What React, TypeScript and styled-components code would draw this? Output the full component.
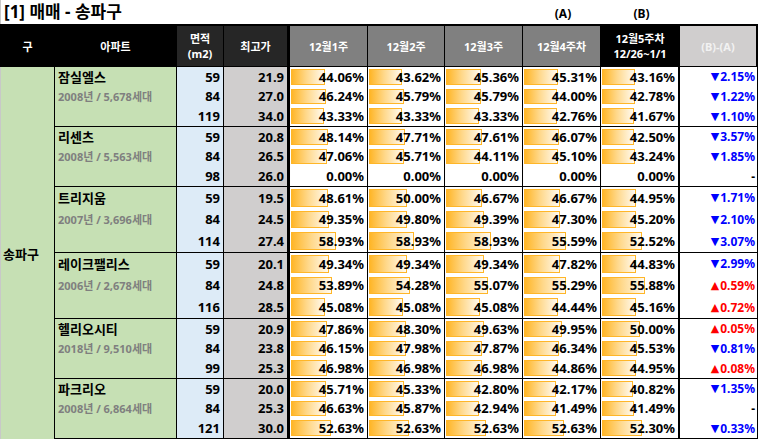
import React from "react";
import styled, { createGlobalStyle } from "styled-components";

const GlobalStyle = createGlobalStyle`
  html, body { margin: 0; padding: 0; background: #fff; }
  body { font-family: "Noto Sans", "Noto Sans CJK KR", sans-serif; color: #000; }
`;

const COLS = "122px 47px 66px 78px 77px 78px 78px 79px 78px";

type Row = { area: string; top: string; w: number[]; diff: string };
type Apt = { name: string; sub: string; h: number; rows: Row[] };

const DATA: Apt[] = [
  {
    name: "잠실엘스", sub: "2008년 / 5,678세대", h: 60,
    rows: [
      { area: "59", top: "21.9", w: [44.06, 43.62, 45.36, 45.31, 43.16], diff: "-2.15" },
      { area: "84", top: "27.0", w: [46.24, 45.79, 45.79, 44.0, 42.78], diff: "-1.22" },
      { area: "119", top: "34.0", w: [43.33, 43.33, 43.33, 42.76, 41.67], diff: "-1.10" },
    ],
  },
  {
    name: "리센츠", sub: "2008년 / 5,563세대", h: 60,
    rows: [
      { area: "59", top: "20.8", w: [48.14, 47.71, 47.61, 46.07, 42.5], diff: "-3.57" },
      { area: "84", top: "26.5", w: [47.06, 45.71, 44.11, 45.1, 43.24], diff: "-1.85" },
      { area: "98", top: "26.0", w: [0, 0, 0, 0, 0], diff: "0" },
    ],
  },
  {
    name: "트리지움", sub: "2007년 / 3,696세대", h: 66,
    rows: [
      { area: "59", top: "19.5", w: [48.61, 50.0, 46.67, 46.67, 44.95], diff: "-1.71" },
      { area: "84", top: "24.5", w: [49.35, 49.8, 49.39, 47.3, 45.2], diff: "-2.10" },
      { area: "114", top: "27.4", w: [58.93, 58.93, 58.93, 55.59, 52.52], diff: "-3.07" },
    ],
  },
  {
    name: "레이크팰리스", sub: "2006년 / 2,678세대", h: 66,
    rows: [
      { area: "59", top: "20.1", w: [49.34, 49.34, 49.34, 47.82, 44.83], diff: "-2.99" },
      { area: "84", top: "24.8", w: [53.89, 54.28, 55.07, 55.29, 55.88], diff: "+0.59" },
      { area: "116", top: "28.5", w: [45.08, 45.08, 45.08, 44.44, 45.16], diff: "+0.72" },
    ],
  },
  {
    name: "헬리오시티", sub: "2018년 / 9,510세대", h: 60,
    rows: [
      { area: "59", top: "20.9", w: [47.86, 48.3, 49.63, 49.95, 50.0], diff: "+0.05" },
      { area: "84", top: "23.8", w: [46.15, 47.98, 47.87, 46.34, 45.53], diff: "-0.81" },
      { area: "99", top: "25.3", w: [46.98, 46.98, 46.98, 44.86, 44.95], diff: "+0.08" },
    ],
  },
  {
    name: "파크리오", sub: "2008년 / 6,864세대", h: 60,
    rows: [
      { area: "59", top: "20.0", w: [45.71, 45.33, 42.8, 42.17, 40.82], diff: "-1.35" },
      { area: "84", top: "25.3", w: [46.63, 45.87, 42.94, 41.49, 41.49], diff: "0" },
      { area: "121", top: "30.0", w: [52.63, 52.63, 52.63, 52.63, 52.3], diff: "-0.33" },
    ],
  },
];

const Sheet = styled.div`
  width: 760px;
  height: 440px;
  overflow: hidden;
  display: flex;
  flex-direction: column;
`;

const TitleRow = styled.div`
  height: 24px;
  display: grid;
  grid-template-columns: 55px ${COLS};
  align-items: center;
  box-sizing: border-box;
  border-left: 1px solid #c8c8c8;
`;

const Title = styled.h1`
  grid-column: 1 / 7;
  margin: 0;
  padding-left: 3px;
  font-size: 17px;
  font-weight: 700;
  white-space: nowrap;
  line-height: 24px;
`;

const Marker = styled.span<{ $col: number }>`
  grid-column: ${(p) => p.$col};
  text-align: center;
  font-size: 12px;
  font-weight: 700;
  padding-top: 2px;
`;

const HeaderRow = styled.div`
  display: grid;
  grid-template-columns: 55px ${COLS};
  width: 758px;
  height: 43px;
  box-sizing: border-box;
  background: #000;
  padding: 2px 0 1px;
`;

const HeadCell = styled.div<{ $bg: string; $color?: string; $br?: number; $bl?: number }>`
  background: ${(p) => p.$bg};
  color: ${(p) => p.$color || "#fff"};
  border-right: ${(p) => p.$br ?? 1}px solid #000;
  border-left: ${(p) => p.$bl ?? 0}px solid #000;
  box-sizing: border-box;
  display: flex;
  flex-direction: column;
  align-items: center;
  justify-content: center;
  font-size: 11px;
  font-weight: 700;
  line-height: 15px;
  text-align: center;
  white-space: nowrap;
`;

const Body = styled.div`
  display: flex;
  height: 372px;
`;

const GuCell = styled.div`
  width: 55px;
  flex: none;
  box-sizing: border-box;
  border-left: 1px solid #c8c8c8;
  border-right: 1px solid #000;
  background: #c6e0b4;
  display: flex;
  align-items: center;
  padding-left: 2px;
  font-size: 13px;
  font-weight: 700;
`;

const Groups = styled.div`
  display: flex;
  flex-direction: column;
`;

const Group = styled.div<{ $h: number }>`
  display: grid;
  grid-template-columns: ${COLS};
  grid-template-rows: repeat(3, 1fr);
  height: ${(p) => p.$h}px;
  box-sizing: border-box;
  border-bottom: 1px solid #000;
`;

const AptCell = styled.div`
  grid-row: span 3;
  background: #c6e0b4;
  border-right: 1px solid #000;
  display: grid;
  grid-template-rows: repeat(3, 1fr);
  align-items: center;
  padding-left: 3px;
  white-space: nowrap;
`;

const AptName = styled.div`
  font-size: 13px;
  font-weight: 700;
`;

const AptSub = styled.div`
  font-size: 11px;
  font-weight: 700;
  color: #7f7f7f;
`;

const NumCell = styled.div<{ $bg: string; $br: number }>`
  background: ${(p) => p.$bg};
  border-right: ${(p) => p.$br}px solid #000;
  display: flex;
  align-items: center;
  justify-content: flex-end;
  padding-right: 3px;
  font-size: 13px;
  font-weight: 700;
`;

const BarCell = styled.div<{ $br: number }>`
  display: grid;
  grid-template: 1fr / 1fr;
  border-right: ${(p) => p.$br}px solid #000;
  background: #fff;
  min-height: 0;
`;

const Bar = styled.div`
  grid-area: 1 / 1;
  justify-self: start;
  margin: 2px 0 2px 1px;
  box-sizing: border-box;
  border: 1px solid #ffb628;
  background: linear-gradient(90deg, #ffb628 0%, #ffd88a 45%, #fffaf0 100%);
`;

const Value = styled.span`
  grid-area: 1 / 1;
  justify-self: end;
  align-self: center;
  padding-right: 3px;
  font-size: 13px;
  font-weight: 700;
  position: relative;
`;

const DiffCell = styled.div<{ $color: string }>`
  border-right: 1px solid #000;
  display: flex;
  align-items: center;
  justify-content: flex-end;
  padding-right: 2px;
  font-size: 12px;
  font-weight: 700;
  color: ${(p) => p.$color};
`;

const Arrow = styled.span`
  font-family: "DejaVu Sans", sans-serif;
  font-size: 11px;
  margin-right: 1px;
`;

function Diff({ v }: { v: string }) {
  if (v === "0") return <DiffCell $color="#000">-</DiffCell>;
  const up = v.startsWith("+");
  return (
    <DiffCell $color={up ? "#ff0000" : "#0000ff"}>
      <Arrow>{up ? "▲" : "▼"}</Arrow>
      {v.slice(1)}%
    </DiffCell>
  );
}

export default function App() {
  return (
    <>
      <GlobalStyle />
      <Sheet>
        <TitleRow>
          <Title>[1] 매매 - 송파구</Title>
          <Marker $col={8}>(A)</Marker>
          <Marker $col={9}>(B)</Marker>
        </TitleRow>
        <HeaderRow>
          <HeadCell $bg="#000" $br={0}>구</HeadCell>
          <HeadCell $bg="#000">아파트</HeadCell>
          <HeadCell $bg="#262626">
            <span>면적</span>
            <span>(m2)</span>
          </HeadCell>
          <HeadCell $bg="#262626" $br={3}>최고가</HeadCell>
          <HeadCell $bg="#808080">12월1주</HeadCell>
          <HeadCell $bg="#808080">12월2주</HeadCell>
          <HeadCell $bg="#808080">12월3주</HeadCell>
          <HeadCell $bg="#808080">12월4주차</HeadCell>
          <HeadCell $bg="#000" $br={1}>
            <span>12월5주차</span>
            <span>12/26~1/1</span>
          </HeadCell>
          <HeadCell $bg="#d0cece" $color="#f2f2f2" $br={2}>(B)-(A)</HeadCell>
        </HeaderRow>
        <Body>
          <GuCell>송파구</GuCell>
          <Groups>
            {DATA.map((apt) => (
              <Group key={apt.name} $h={apt.h}>
                <AptCell>
                  <AptName>{apt.name}</AptName>
                  <AptSub>{apt.sub}</AptSub>
                </AptCell>
                {apt.rows.map((r) => (
                  <React.Fragment key={r.area}>
                    <NumCell $bg="#ddebf7" $br={1}>{r.area}</NumCell>
                    <NumCell $bg="#d0cece" $br={3}>{r.top}</NumCell>
                    {r.w.map((v, i) => (
                      <BarCell key={i} $br={i === 4 ? 2 : 1}>
                        {v > 0 && <Bar style={{ width: `${(v * 0.76).toFixed(1)}px` }} />}
                        <Value>{v.toFixed(2)}%</Value>
                      </BarCell>
                    ))}
                    <Diff v={r.diff} />
                  </React.Fragment>
                ))}
              </Group>
            ))}
          </Groups>
        </Body>
      </Sheet>
    </>
  );
}
